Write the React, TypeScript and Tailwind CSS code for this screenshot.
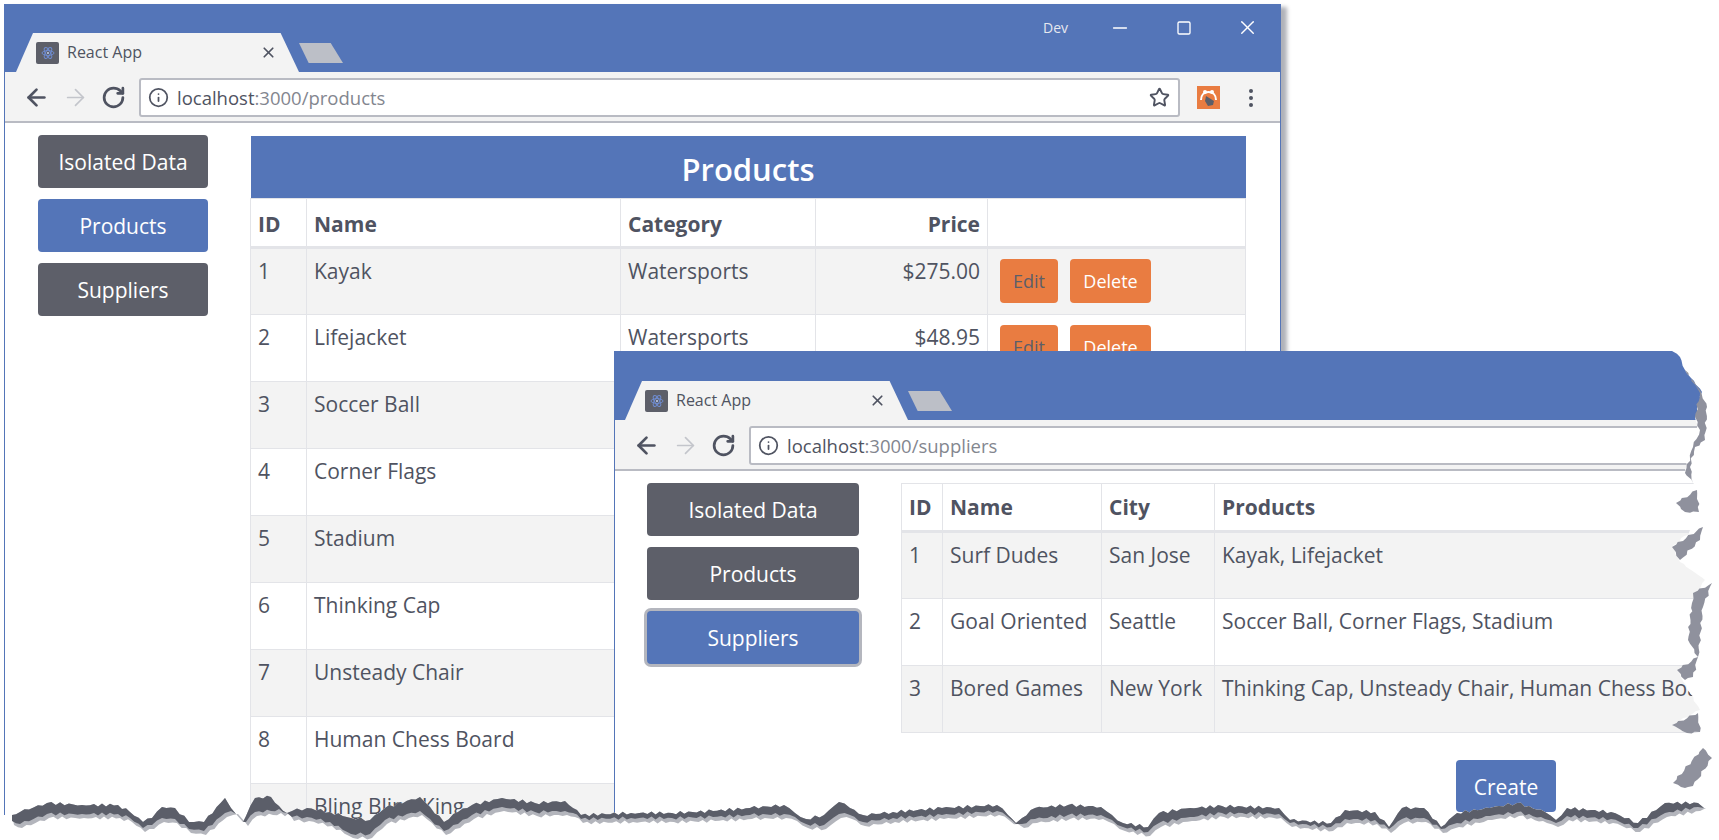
import { ArrowLeft, ArrowRight, Info, Minus, RotateCw, Square, Star, X } from "lucide-react";

type Pt = [number, number];

const products: [number, string, string, string][] = [
  [1, "Kayak", "Watersports", "$275.00"],
  [2, "Lifejacket", "Watersports", "$48.95"],
  [3, "Soccer Ball", "", ""],
  [4, "Corner Flags", "", ""],
  [5, "Stadium", "", ""],
  [6, "Thinking Cap", "", ""],
  [7, "Unsteady Chair", "", ""],
  [8, "Human Chess Board", "", ""],
  [9, "Bling Bling King", "", ""],
];

const suppliers: [number, string, string, string][] = [
  [1, "Surf Dudes", "San Jose", "Kayak, Lifejacket"],
  [2, "Goal Oriented", "Seattle", "Soccer Ball, Corner Flags, Stadium"],
  [3, "Bored Games", "New York", "Thinking Cap, Unsteady Chair, Human Chess Board"],
];

// torn paper edge along the bottom: x, top y, thickness of the dark band
const tear: [number, number, number][] = [
  [12, 815, 6], [20, 812, 12], [47, 803, 11], [82, 805, 9], [118, 805, 9], [130, 812, 6], [143, 822, 6],
  [152, 818, 7], [162, 807, 11], [175, 808, 11], [189, 822, 7], [204, 822, 9], [225, 798, 15], [231, 808, 3],
  [236, 814, 0], [243, 822, 0], [246, 816, 6], [255, 798, 14], [271, 797, 14], [279, 806, 3], [287, 813, 0],
  [292, 811, 6], [307, 808, 9], [330, 812, 10], [351, 818, 16], [370, 820, 14], [385, 808, 12], [420, 797, 14],
  [430, 807, 12], [444, 822, 9], [458, 812, 12], [472, 805, 10], [502, 798, 9], [535, 803, 9], [565, 801, 10],
  [573, 808, 5], [581, 815, 4], [631, 813, 5], [672, 813, 5], [713, 811, 6], [750, 808, 7], [784, 805, 9],
  [795, 813, 4], [806, 819, 5], [824, 815, 10], [839, 802, 12], [850, 808, 7], [863, 815, 7], [893, 812, 6],
  [942, 808, 7], [997, 805, 6], [1008, 815, 2], [1016, 823, 1], [1022, 818, 6], [1035, 808, 11], [1068, 805, 10],
  [1101, 807, 8], [1112, 815, 5], [1123, 823, 4], [1148, 827, 5], [1159, 813, 10], [1190, 808, 9], [1222, 806, 7],
  [1279, 808, 6], [1290, 820, 3], [1331, 823, 4], [1345, 810, 9], [1375, 812, 8], [1389, 827, 2], [1402, 808, 11],
  [1424, 808, 10], [1441, 827, 2], [1457, 813, 10], [1490, 808, 8], [1517, 803, 9], [1545, 812, 7], [1556, 820, 3],
  [1567, 808, 8], [1611, 812, 7], [1638, 823, 5], [1665, 803, 10], [1698, 803, 4], [1704, 808, 0],
];

// torn right edge of the front window, top to bottom
const rightEdge: Pt[] = [
  [1672, 351], [1680, 357], [1685, 370], [1702, 392], [1695, 417], [1700, 437], [1690, 453], [1685, 470],
  [1695, 487], [1677, 503], [1697, 513], [1700, 523], [1672, 547], [1680, 562], [1705, 580], [1690, 607],
  [1688, 633], [1698, 655], [1677, 670], [1690, 693], [1700, 710], [1672, 725], [1700, 733], [1710, 748],
  [1673, 783], [1693, 802], [1704, 806],
];

// gray shadow fragments beside the right edge
const shadows: Pt[][] = [
  [[1685, 370], [1700, 390], [1707, 407], [1705, 440], [1695, 447], [1690, 467], [1693, 483], [1685, 473], [1693, 447], [1700, 430], [1695, 417], [1700, 393]],
  [[1676, 503], [1697, 490], [1699, 512], [1685, 512]],
  [[1672, 547], [1703, 527], [1700, 540], [1680, 560]],
  [[1693, 593], [1712, 583], [1703, 607], [1698, 657], [1688, 640], [1692, 603]],
  [[1677, 670], [1698, 657], [1693, 677], [1685, 680]],
  [[1672, 725], [1698, 713], [1700, 732], [1687, 733]],
  [[1673, 783], [1703, 748], [1712, 758], [1693, 786], [1685, 788]],
];

const jagged = (pts: [number, number, number][]) => {
  const out: [number, number, number][] = [];
  pts.forEach((p, i) => {
    const next = pts[i + 1];
    out.push(p);
    if (!next) return;
    const steps = Math.floor((next[0] - p[0]) / 4);
    for (let s = 1; s < steps; s++) {
      const f = s / steps;
      const wobble = Math.sin(s * 2.7 + i * 1.3) * 1.6;
      out.push([p[0] + (next[0] - p[0]) * f, p[1] + (next[1] - p[1]) * f + wobble, p[2] + (next[2] - p[2]) * f]);
    }
  });
  return out;
};

// same thing for the vertical edges
const rough = (pts: Pt[]) => {
  const out: Pt[] = [];
  pts.forEach((p, i) => {
    const next = pts[i + 1];
    out.push(p);
    if (!next) return;
    const steps = Math.floor(Math.hypot(next[0] - p[0], next[1] - p[1]) / 4);
    for (let s = 1; s < steps; s++) {
      const f = s / steps;
      out.push([
        p[0] + (next[0] - p[0]) * f + Math.sin(s * 2.3 + i) * 1.2,
        p[1] + (next[1] - p[1]) * f + Math.cos(s * 1.9 + i) * 0.8,
      ]);
    }
  });
  return out;
};

const toPoints = (pts: Pt[]) => pts.map((p) => `${p[0].toFixed(1)},${p[1].toFixed(1)}`).join(" ");

function TornEdges() {
  const band = jagged(tear);
  const top: Pt[] = band.map((p) => [p[0], p[1]]);
  const bottom: Pt[] = band.map((p) => [p[0], p[1] + p[2]]);
  const shadow: Pt[] = band.map((p) => [p[0] + 2, p[1] + p[2] + (p[2] > 1 ? 4 : 0)]);

  return (
    <svg className="absolute left-0 top-0 pointer-events-none" width="1719" height="840" viewBox="0 0 1719 840">
      <polygon fill="#ffffff" points={toPoints([...rough(rightEdge), [1719, 806], [1719, 351]])} />
      <polygon fill="#ffffff" points={toPoints([...top, [1719, 800], [1719, 840], [0, 840], [0, 815]])} />
      {shadows.map((s, i) => (
        <polygon key={i} fill="#8f919d" points={toPoints(rough([...s, s[0]]))} />
      ))}
      <polygon fill="#b3b5bc" points={toPoints([...top, ...[...shadow].reverse()])} />
      <polygon fill="#5b5e69" points={toPoints([...top, ...[...bottom].reverse()])} />
    </svg>
  );
}

function Favicon() {
  return (
    <div className="w-[23px] h-[22px] shrink-0 rounded-[2px] bg-[#5d5f69] flex items-center justify-center">
      <svg width="14" height="14" viewBox="0 0 14 14" fill="none" stroke="#6f8cd0" strokeWidth="1">
        <ellipse cx="7" cy="7" rx="6" ry="2.4" />
        <ellipse cx="7" cy="7" rx="6" ry="2.4" transform="rotate(60 7 7)" />
        <ellipse cx="7" cy="7" rx="6" ry="2.4" transform="rotate(120 7 7)" />
        <circle cx="7" cy="7" r="1" fill="#c7d3ee" stroke="none" />
      </svg>
    </div>
  );
}

function BrowserTab() {
  return (
    <div className="flex items-end">
      <div className="w-[283px] h-[39px] bg-[#f3f3f3] [clip-path:polygon(6%_0,93.5%_0,100%_100%,0_100%)] flex items-start pt-[9px] pl-[20px] font-['Open_Sans',sans-serif] text-[16px] leading-[20px] text-[#4f5361]">
        <Favicon />
        <span className="ml-[8px]">React App</span>
        <X className="ml-auto mr-[22px] mt-[2px]" size={17} strokeWidth={2.4} />
      </div>
      <div className="w-[44px] h-[20px] mb-[9px] bg-[#bcbfc7] [clip-path:polygon(0_0,72%_0,100%_100%,22%_100%)]" />
    </div>
  );
}

function Toolbar({ url, path, right }: { url: string; path: string; right?: boolean }) {
  return (
    <div className={`h-[51px] bg-[#f3f3f3] border-b-2 border-[#b9bbc3] flex items-start pt-[6px] pl-[18px] ${right ? "pr-[27px]" : ""}`}>
      <div className="flex items-center h-[39px] gap-[12px] text-[#4f5361]">
        <ArrowLeft size={27} strokeWidth={2.4} />
        <ArrowRight size={27} strokeWidth={1.5} className="text-[#c3c5cb]" />
        <RotateCw size={25} strokeWidth={2.6} />
      </div>
      <div className="ml-[13px] h-[39px] flex-1 bg-white border-2 border-[#b9bbc3] rounded-[3px] flex items-center pl-[7px] pr-[8px] font-['Open_Sans',sans-serif] text-[18.5px] text-[#4f5361]">
        <Info size={21} strokeWidth={2} />
        <span className="ml-[8px]">
          {url}
          <span className="text-[#83868f]">{path}</span>
        </span>
        {right && <Star size={21} strokeWidth={2.2} className="ml-auto" />}
      </div>
      {right && (
        <div className="flex items-center h-[39px] ml-[17px] gap-[29px]">
          <div className="w-[23px] h-[23px] bg-[#e97c41] flex items-center justify-center">
            <svg width="21" height="21" viewBox="0 0 21 21">
              <path d="M3 13c0-5 3-8 7.5-8S18 8 18 13" fill="none" stroke="#ffffff" strokeWidth="2" />
              <circle cx="7" cy="5" r="2" fill="#ffffff" />
              <circle cx="14" cy="5" r="2" fill="#ffffff" />
              <path d="M8 9l8 5-1 4-5 1-3-5z" fill="#5b5e69" />
            </svg>
          </div>
          <div className="flex flex-col gap-[3px]">
            <div className="w-[4px] h-[4px] rounded-full bg-[#4f5361]" />
            <div className="w-[4px] h-[4px] rounded-full bg-[#4f5361]" />
            <div className="w-[4px] h-[4px] rounded-full bg-[#4f5361]" />
          </div>
        </div>
      )}
    </div>
  );
}

function SideButton({ label, active, focus, w }: { label: string; active?: boolean; focus?: boolean; w: string }) {
  return (
    <button
      className={`${w} h-[53px] pt-[2px] rounded-[4px] text-white text-[21px] font-['Open_Sans',sans-serif] ${
        active ? "bg-[#5475b8]" : "bg-[#5d5f69]"
      } ${focus ? "ring-[3px] ring-[#b4b6be]" : ""}`}
    >
      {label}
    </button>
  );
}

const thClass = "border border-[#e3e4e8] border-b-[3px] px-[7px] align-middle font-bold";
const tdClass = "border border-[#e3e4e8] px-[7px] pt-[7px] align-top";

function ProductsWindow() {
  return (
    <div className="absolute left-[4px] top-[4px] w-[1277px] h-[819px] shadow-[6px_3px_4px_#b0b2b9] bg-white overflow-hidden border-x border-[#5475b8]">
      <div className="h-[68px] bg-[#5475b8] relative flex items-end pl-[11px]">
        <BrowserTab />
        <div className="absolute right-[21px] top-[12px] flex items-center text-white">
          <span className="font-['Open_Sans',sans-serif] text-[14px] text-[#e6e8ef] mr-[41px]">Dev</span>
          <Minus size={22} strokeWidth={1.5} className="mr-[45px]" />
          <Square size={16} strokeWidth={2} className="mr-[44px]" />
          <X size={23} strokeWidth={1.5} />
        </div>
      </div>
      <Toolbar url="localhost" path=":3000/products" right />
      <div className="flex pl-[33px] pt-[12px] gap-[42px]">
        <div className="flex flex-col gap-[11px] shrink-0">
          <SideButton w="w-[170px]" label="Isolated Data" />
          <SideButton w="w-[170px]" label="Products" active />
          <SideButton w="w-[170px]" label="Suppliers" />
        </div>
        <table className="table-fixed w-[996px] h-fit mt-[1px] border-collapse font-['Open_Sans',sans-serif] text-[21px] leading-[30px] text-[#4f5361]">
          <colgroup>
            <col className="w-[56px]" />
            <col className="w-[314px]" />
            <col className="w-[195px]" />
            <col className="w-[172px]" />
            <col />
          </colgroup>
          <thead>
            <tr>
              <th colSpan={5} className="h-[62px] pt-[4px] bg-[#5475b8] text-white text-[31px] font-semibold text-center">
                Products
              </th>
            </tr>
            <tr className="h-[49px] text-left">
              <th className={`${thClass} pt-[3px]`}>ID</th>
              <th className={`${thClass} pt-[3px]`}>Name</th>
              <th className={`${thClass} pt-[3px]`}>Category</th>
              <th className={`${thClass} pt-[3px] text-right`}>Price</th>
              <th className={thClass}></th>
            </tr>
          </thead>
          <tbody>
            {products.map((p, i) => (
              <tr key={p[0]} className={`h-[67px] ${i % 2 === 0 ? "bg-[#f3f3f3]" : ""}`}>
                <td className={tdClass}>{p[0]}</td>
                <td className={tdClass}>{p[1]}</td>
                <td className={tdClass}>{p[2]}</td>
                <td className={`${tdClass} text-right`}>{p[3]}</td>
                <td className="border border-[#e3e4e8] pl-[12px] pt-[10px] align-top">
                  {p[3] && (
                    <div className="flex gap-[12px] text-[18px]">
                      <button className="w-[58px] h-[44px] pt-[1px] rounded-[4px] bg-[#e97c41] text-[#5b5e69]">Edit</button>
                      <button className="w-[81px] h-[44px] pt-[1px] rounded-[4px] bg-[#e97c41] text-white">Delete</button>
                    </div>
                  )}
                </td>
              </tr>
            ))}
          </tbody>
        </table>
      </div>
    </div>
  );
}

function SuppliersWindow() {
  return (
    <div className="absolute left-[614px] top-[351px] w-[1105px] h-[489px] bg-white overflow-hidden border-l border-[#5475b8]">
      <div className="h-[69px] bg-[#5475b8] flex items-end pl-[10px]">
        <BrowserTab />
      </div>
      <Toolbar url="localhost" path=":3000/suppliers" />
      <div className="flex pl-[32px] pt-[12px] gap-[42px]">
        <div className="flex flex-col gap-[11px] shrink-0">
          <SideButton w="w-[212px]" label="Isolated Data" />
          <SideButton w="w-[212px]" label="Products" />
          <SideButton w="w-[212px]" label="Suppliers" active focus />
        </div>
        <div className="w-[1210px] shrink-0">
          <table className="table-fixed w-full border-collapse font-['Open_Sans',sans-serif] text-[21px] leading-[30px] text-[#4f5361]">
            <colgroup>
              <col className="w-[41px]" />
              <col className="w-[159px]" />
              <col className="w-[113px]" />
              <col />
            </colgroup>
            <thead>
              <tr className="h-[48px] text-left">
                <th className={thClass}>ID</th>
                <th className={thClass}>Name</th>
                <th className={thClass}>City</th>
                <th className={thClass}>Products</th>
              </tr>
            </thead>
            <tbody>
              {suppliers.map((s, i) => (
                <tr key={s[0]} className={`h-[67px] ${i % 2 === 0 ? "bg-[#f3f3f3]" : ""}`}>
                  <td className={tdClass}>{s[0]}</td>
                  <td className={tdClass}>{s[1]}</td>
                  <td className={tdClass}>{s[2]}</td>
                  <td className={tdClass}>{s[3]}</td>
                </tr>
              ))}
            </tbody>
          </table>
          <div className="flex justify-center mt-[27px]">
            <button className="w-[100px] h-[52px] pt-[4px] rounded-[4px] bg-[#5475b8] text-white text-[21px] font-['Open_Sans',sans-serif]">
              Create
            </button>
          </div>
        </div>
      </div>
    </div>
  );
}

export default function App() {
  return (
    <div className="relative w-[1719px] h-[840px] bg-white overflow-hidden">
      <ProductsWindow />
      <SuppliersWindow />
      <TornEdges />
    </div>
  );
}
